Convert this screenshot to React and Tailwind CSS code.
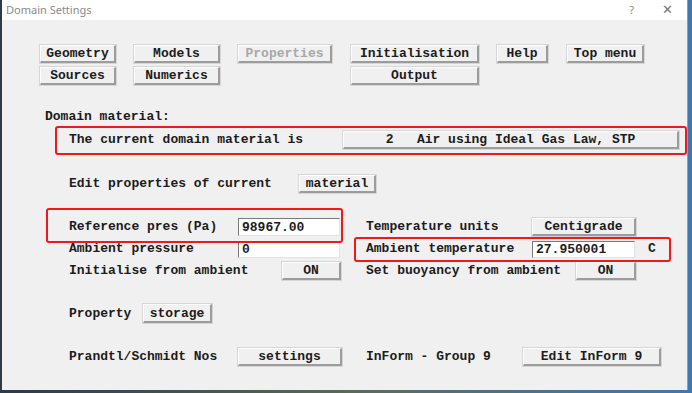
import React from 'react';

const mono = { fontFamily: '"Liberation Mono", "Courier New", monospace' };

const Btn = ({ children, w, h = 'h-[18px]', disabled, className = '' }) => (
  <div
    className={`${w} ${h} ${className} flex items-center justify-center shrink-0 whitespace-pre bg-[#f0f0f0] border-t border-l border-t-[#fdfdfd] border-l-[#fdfdfd] border-r-2 border-b-2 border-r-[#9c9c9c] border-b-[#9c9c9c] shadow-[0_0_0_1px_#d6d6d6] text-[13px] font-bold leading-none ${disabled ? 'text-[#a8a8a8]' : 'text-[#1c1c1c]'}`}
  >
    {children}
  </div>
);

const Field = ({ value, w, h = 'h-[18px]' }) => (
  <div className={`${w} ${h} shrink-0 bg-white border border-t-[#7a7a7a] border-l-[#7a7a7a] border-r-[#e3e3e3] border-b-[#e3e3e3] flex items-center pl-[3px] text-[13px] font-bold text-[#1c1c1c] leading-none`}>
    {value}
  </div>
);

const Label = ({ children, w = '' }) => (
  <div className={`${w} shrink-0 text-[13px] font-bold text-[#1c1c1c] leading-4 whitespace-pre`}>{children}</div>
);

export default function App() {
  return (
    <div className="w-[692px] h-[393px] overflow-hidden bg-gradient-to-r from-[#2d3a48] via-[#5a6a58] to-[#3f78b0] flex items-start">
      <div className="relative ml-[2px] w-[686px] h-[390px] bg-[#f0f0f0] border-r border-[#9a9a9a] flex flex-col" style={mono}>
        {/* title bar */}
        <div className="h-[20px] bg-white flex items-center pl-[4px] pr-[14px] text-[11px] text-[#8a8a8a]" style={{ fontFamily: '"Noto Sans", "Liberation Sans", sans-serif' }}>
          <span className="flex-1">Domain Settings</span>
          <span className="mr-[28px] text-[11px]">?</span>
          <span className="text-[13px] font-light text-[#777]">✕</span>
        </div>

        {/* top button rows */}
        <div className="pl-[38px] mt-[25px] flex">
          <Btn w="w-[76px]">Geometry</Btn>
          <Btn w="w-[86px]" className="ml-[18px]">Models</Btn>
          <Btn w="w-[94px]" className="ml-[18px]" disabled>Properties</Btn>
          <Btn w="w-[128px]" className="ml-[19px]">Initialisation</Btn>
          <Btn w="w-[51px]" className="ml-[18px]">Help</Btn>
          <Btn w="w-[77px]" className="ml-[19px]">Top menu</Btn>
        </div>
        <div className="pl-[38px] mt-[4px] flex">
          <Btn w="w-[76px]">Sources</Btn>
          <Btn w="w-[86px]" className="ml-[18px]">Numerics</Btn>
          <Btn w="w-[128px]" className="ml-[131px]">Output</Btn>
        </div>

        <div className="pl-[43px] mt-[24px]">
          <Label>Domain material:</Label>
        </div>

        <div className="pl-[67px] mt-[6px] flex items-center">
          <Label w="w-[274px]">The current domain material is</Label>
          <Btn w="w-[336px]">{'2   Air using Ideal Gas Law, STP'}</Btn>
        </div>

        <div className="pl-[67px] mt-[26px] flex items-center">
          <Label w="w-[230px]">Edit properties of current</Label>
          <Btn w="w-[77px]">material</Btn>
        </div>

        {/* pressure / temperature block */}
        <div className="pl-[67px] mt-[25px] flex">
          <div className="w-[297px] flex flex-col gap-[4px]">
            <div className="flex items-center h-[18px]">
              <Label w="w-[169px]">Reference pres (Pa)</Label>
              <Field w="w-[102px]" value="98967.00" />
            </div>
            <div className="flex items-center h-[18px]">
              <Label w="w-[169px]">Ambient pressure</Label>
              <Field w="w-[102px]" h="h-[17px]" value="0" />
            </div>
            <div className="flex items-center h-[18px]">
              <Label w="w-[213px]">Initialise from ambient</Label>
              <Btn w="w-[59px]">ON</Btn>
            </div>
          </div>
          <div className="flex flex-col gap-[4px]">
            <div className="flex items-center h-[18px]">
              <Label w="w-[166px]">Temperature units</Label>
              <Btn w="w-[104px]">Centigrade</Btn>
            </div>
            <div className="flex items-center h-[18px]">
              <Label w="w-[166px]">Ambient temperature</Label>
              <Field w="w-[103px]" h="h-[17px]" value="27.950001" />
              <Label w="ml-[13px]">C</Label>
            </div>
            <div className="flex items-center h-[18px]">
              <Label w="w-[210px]">Set buoyancy from ambient</Label>
              <Btn w="w-[60px]">ON</Btn>
            </div>
          </div>
        </div>

        <div className="pl-[67px] mt-[24px] flex items-center">
          <Label w="w-[74px]">Property</Label>
          <Btn w="w-[69px]" h="h-[19px]">storage</Btn>
        </div>

        <div className="pl-[67px] mt-[25px] flex items-center">
          <Label w="w-[169px]">Prandtl/Schmidt Nos</Label>
          <Btn w="w-[104px]">settings</Btn>
          <Label w="ml-[24px] w-[157px]">InForm - Group 9</Label>
          <Btn w="w-[138px]">Edit InForm 9</Btn>
        </div>

        {/* red annotation boxes */}
        <div className="absolute left-[53px] top-[126px] w-[632px] h-[29px] border-2 border-[#f01818] rounded-[3px] pointer-events-none" />
        <div className="absolute left-[44px] top-[208px] w-[297px] h-[35px] border-2 border-[#f01818] rounded-[3px] pointer-events-none" />
        <div className="absolute left-[352px] top-[237px] w-[317px] h-[25px] border-2 border-[#f01818] rounded-[3px] pointer-events-none" />
      </div>
    </div>
  );
}
